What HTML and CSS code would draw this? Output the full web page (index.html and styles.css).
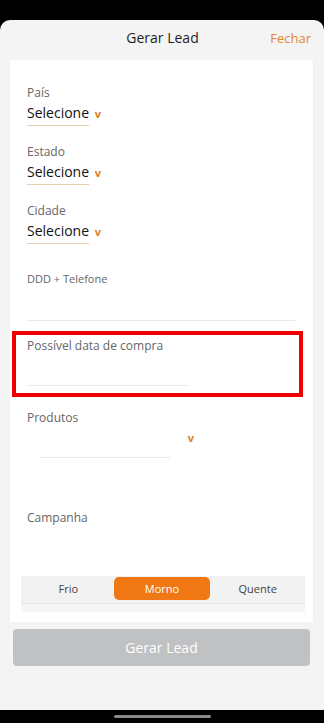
FILE: index.html
```html
<!DOCTYPE html>
<html>
<head>
    <title>Gerar Lead</title>
    <link rel="stylesheet" href="styles.css">
</head>
<body>
    <div class="status-bar"></div>

    <div class="sheet">
        <div class="header">
            <span></span>
            <h2 class="title">Gerar Lead</h2>
            <a class="close-btn">Fechar</a>
        </div>

        <div class="card">
            <div class="field">
                <div class="label">País</div>
                <div class="select"><span class="select-value">Selecione</span><span class="chevron">v</span></div>
            </div>
            <div class="field">
                <div class="label">Estado</div>
                <div class="select"><span class="select-value">Selecione</span><span class="chevron">v</span></div>
            </div>
            <div class="field">
                <div class="label">Cidade</div>
                <div class="select"><span class="select-value">Selecione</span><span class="chevron">v</span></div>
            </div>

            <div class="field phone">
                <div class="label small">DDD + Telefone</div>
                <div class="input"></div>
            </div>

            <div class="highlight">
                <div class="label">Possível data de compra</div>
                <div class="input short"></div>
            </div>

            <div class="field products">
                <div class="label">Produtos</div>
                <div class="multi-select">
                    <div class="input product-input"></div>
                    <span class="chevron">v</span>
                </div>
            </div>

            <div class="field campaign">
                <div class="label">Campanha</div>
            </div>

            <div class="segments">
                <div class="segment-row">
                    <button class="segment">Frio</button>
                    <button class="segment active">Morno</button>
                    <button class="segment">Quente</button>
                </div>
            </div>
        </div>

        <div class="footer">
            <button class="submit-btn" disabled>Gerar Lead</button>
        </div>
    </div>

    <div class="nav-bar"><div class="home-indicator"></div></div>
</body>
</html>
```

FILE: styles.css
```css
* { box-sizing: border-box; }
body {
    margin: 0;
    background: #000;
    font-family: "Open Sans", Arial, sans-serif;
    width: 324px;
    height: 723px;
    overflow: hidden;
}
.status-bar { height: 20px; background: #000; }

.sheet {
    height: 690px;
    background: #f4f4f4;
    border-radius: 10px 10px 0 0;
    display: flex;
    flex-direction: column;
}

/* Cabeçalho */
.header {
    height: 40px;
    display: grid;
    grid-template-columns: 1fr auto 1fr;
    align-items: center;
    padding: 0 13px 5px 14px;
}
.title {
    margin: 0;
    font-size: 14px;
    font-weight: 500;
    color: #1f1f1f;
}
.close-btn {
    justify-self: end;
    font-size: 13px;
    color: #e3862c;
}

/* Cartão do formulário */
.card {
    margin: 0 10px;
    height: 562px;
    background: #fff;
    border-right: 1px solid #fbecec;
    padding: 26px 18px 0 17px;
}
.field { margin-bottom: 19px; }
.label {
    font-size: 12px;
    line-height: 14px;
    color: #666;
}
.label.small { font-size: 11px; }
.select {
    margin-top: 5px;
    display: flex;
    align-items: center;
    gap: 6px;
}
.select-value {
    font-size: 14px;
    line-height: 16px;
    color: #111;
    padding-bottom: 4px;
    border-bottom: 1px solid #e9cfad;
}
.chevron {
    font-size: 10px;
    font-weight: 700;
    color: #d98128;
    transform: scaleX(1.1);
    margin-top: -3px;
}
.input {
    border-bottom: 1px solid #e8e8e8;
}

.phone { margin-top: 28px; margin-bottom: 10px; }
.phone .input { height: 35px; }

.highlight {
    margin: 0 -8px 0 -15px;
    height: 66px;
    border: 4px solid #ee0000;
    padding: 4px 0 0 11px;
}
.highlight .input {
    width: 162px;
    height: 33px;
}

.products { margin-top: 14px; }
.multi-select {
    display: flex;
    align-items: flex-start;
    gap: 18px;
}
.product-input {
    margin-left: 13px;
    width: 130px;
    height: 33px;
}
.multi-select .chevron { margin-top: 6px; }

.campaign { margin-top: 53px; margin-bottom: 51px; }

/* Segmentos */
.segments {
    margin: 0 -10px 0 -6px;
    background: #f6f6f6;
    height: 36px;
}
.segment-row {
    display: grid;
    grid-template-columns: repeat(3, 1fr);
    align-items: center;
    height: 28px;
    padding-bottom: 2px;
    background: #f2f2f2;
    border-bottom: 1px solid #e6e6e6;
}
.segment {
    border: none;
    background: none;
    font-family: inherit;
    font-size: 11px;
    color: #444;
    height: 23px;
    padding: 0;
    border-radius: 5px;
}
.segment.active {
    background: #f07814;
    color: #fff;
    margin-left: -2px;
}

/* Rodapé */
.footer { padding: 7px 14px 0 13px; }
.submit-btn {
    width: 100%;
    height: 37px;
    border: none;
    border-radius: 4px;
    background: #c0c1c2;
    color: #fff;
    font-family: inherit;
    font-size: 14px;
}

.nav-bar {
    height: 13px;
    display: flex;
    justify-content: center;
    padding-top: 5px;
}
.home-indicator {
    width: 97px;
    height: 3px;
    border-radius: 2px;
    background: #8a8a8a;
}
```
